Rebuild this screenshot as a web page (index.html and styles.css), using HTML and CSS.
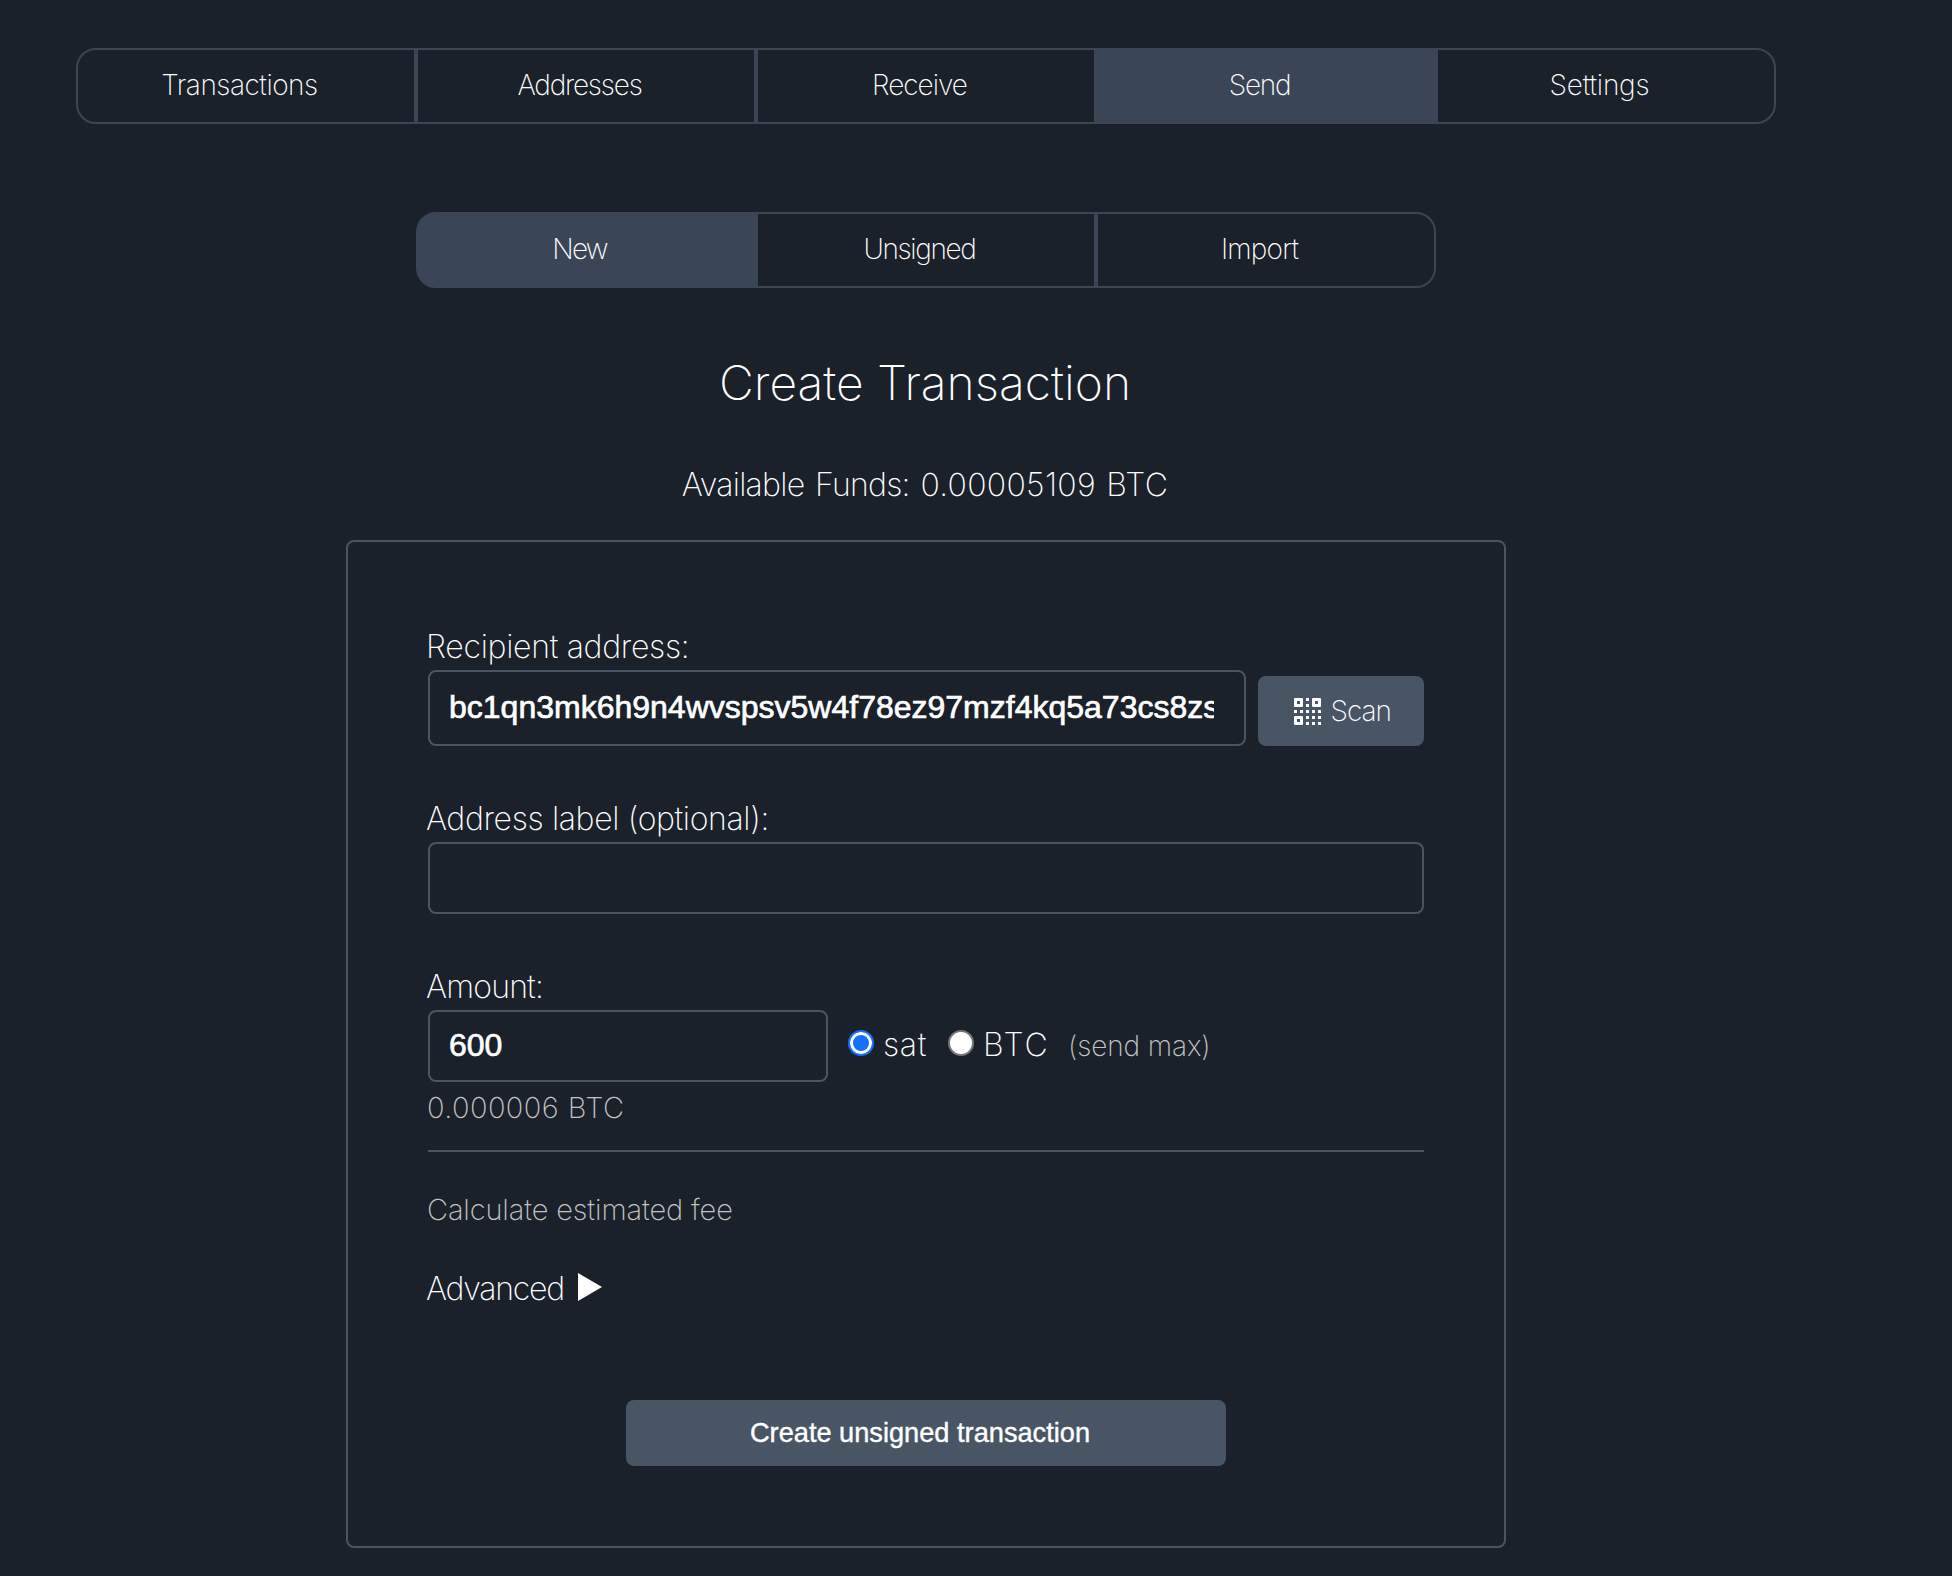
FILE: index.html
```html
<!DOCTYPE html>
<html lang="en">
<head>
<meta charset="utf-8">
<title>Create Transaction</title>
<link rel="stylesheet" href="styles.css">
</head>
<body>
<main class="page">
  <nav class="tabs">
    <a class="tab tab-transactions">Transactions</a>
    <a class="tab tab-addresses">Addresses</a>
    <a class="tab tab-receive">Receive</a>
    <a class="tab tab-send active">Send</a>
    <a class="tab tab-settings">Settings</a>
  </nav>
  <nav class="tabs subtabs">
    <a class="tab tab-new active">New</a>
    <a class="tab tab-unsigned">Unsigned</a>
    <a class="tab tab-import">Import</a>
  </nav>
  <h1 class="title">Create Transaction</h1>
  <h2 class="funds">Available Funds: <span class="funds-value">0.00005109 BTC</span></h2>
  <form class="card">
    <label class="label label-recipient" for="address">Recipient address:</label>
    <div class="row">
      <input class="input input-address" id="address" type="text" value="bc1qn3mk6h9n4wvspsv5w4f78ez97mzf4kq5a73cs8zs">
      <button class="scan" type="button">
        <svg class="qr" viewBox="0 0 27 27" fill="#fff">
          <path fill-rule="evenodd" d="M1 0h7a1 1 0 0 1 1 1v7a1 1 0 0 1-1 1H1a1 1 0 0 1-1-1V1a1 1 0 0 1 1-1zM3 3v3h3V3zM19 0h7a1 1 0 0 1 1 1v7a1 1 0 0 1-1 1h-7a1 1 0 0 1-1-1V1a1 1 0 0 1 1-1zM21 3v3h3V3zM1 18h7a1 1 0 0 1 1 1v7a1 1 0 0 1-1 1H1a1 1 0 0 1-1-1v-7a1 1 0 0 1 1-1zM3 21v3h3v-3z"/>
          <path d="M12 0h3v3h-3zM12 6h3v3h-3zM0 12h3v3H0zM6 12h3v3H6zM12 12h3v3h-3zM18 12h3v3h-3zM24 12h3v3h-3zM12 18h3v3h-3zM18 18h3v3h-3zM24 18h3v3h-3zM12 24h3v3h-3zM18 24h3v3h-3zM24 24h3v3h-3z"/>
        </svg>
        <span class="scan-text">Scan</span>
      </button>
    </div>
    <label class="label" for="name">Address label (optional):</label>
    <input class="input" id="name" type="text">
    <label class="label label-amount" for="amount">Amount:</label>
    <div class="row row-amount">
      <input class="input input-amount" id="amount" type="text" value="600">
      <input class="radio" type="radio" name="unit" checked>
      <span class="unit unit-sat">sat</span>
      <input class="radio" type="radio" name="unit">
      <span class="unit unit-btc">BTC</span>
      <span class="max">(send max)</span>
    </div>
    <div class="note converted">0.000006 BTC</div>
    <hr class="rule">
    <div class="note fee">Calculate estimated fee</div>
    <div class="advanced"><span>Advanced</span><svg class="arrow" viewBox="0 0 24 28"><path d="M0 0L24 14L0 28z" fill="#fff"/></svg></div>
    <button class="submit" type="button">Create unsigned transaction</button>
  </form>
</main>
</body>
</html>
```
FILE: styles.css
```css
* { box-sizing: border-box; }

body {
  margin: 0;
  background: #1a212a;
  color: #fff;
  font-family: Inter, "Liberation Sans", sans-serif;
  font-weight: 200;
}

.page {
  display: flex;
  flex-direction: column;
  align-items: center;
  width: 1852px;
  height: 1576px;
  padding-top: 48px;
}

.tabs { display: flex; }
.subtabs { margin-top: 88px; }

.tab {
  display: flex;
  align-items: center;
  justify-content: center;
  width: 340px;
  height: 76px;
  padding: 0 13px 3px 0;
  border: 2px solid #3a4656;
  font-size: 28px;
}
.tab:first-child { border-radius: 20px 0 0 20px; }
.tab:last-child { border-radius: 0 20px 20px 0; }
.active { background: #3a4656; }
.tab-transactions { letter-spacing: -0.5px; }
.tab-addresses { letter-spacing: -1.2px; }
.tab-receive { letter-spacing: -1px; }
.tab-send { letter-spacing: -1.3px; }
.tab-settings { letter-spacing: -0.2px; }
.tab-new { letter-spacing: -1.8px; }
.tab-unsigned { letter-spacing: -1.35px; }
.tab-import { letter-spacing: -0.8px; }

.title {
  margin: 65px 2px 0 0;
  font-size: 48px;
  line-height: 60px;
  font-weight: 200;
  letter-spacing: 0;
}
.funds {
  margin: 52px 2px 35px 0;
  font-size: 32px;
  line-height: 40px;
  font-weight: 200;
  letter-spacing: -0.75px;
  word-spacing: 2.5px;
}
.funds-value { letter-spacing: 0.3px; word-spacing: 1px; }

.card {
  display: flex;
  flex-direction: column;
  width: 1160px;
  height: 1008px;
  padding: 85px 80px 0;
  border: 2px solid #485565;
  border-radius: 8px;
}

.label {
  margin: 0 0 3px -2px;
  font-size: 32px;
  line-height: 40px;
  letter-spacing: -0.35px;
}
.label-recipient { letter-spacing: -0.3px; }
.label-amount { letter-spacing: -0.8px; }

.row {
  display: flex;
  align-items: flex-end;
  margin-bottom: 53px;
}

.input {
  height: 72px;
  margin: 0 0 53px;
  padding: 0 30px 2px 19px;
  background: transparent;
  border: 2px solid #485565;
  border-radius: 8px;
  color: #fff;
  font: 400 32px "Liberation Sans", Arial, sans-serif;
  -webkit-text-stroke: 0.7px #fff;
}
.row .input { margin: 0; }
.input-address { width: 818px; height: 76px; }

.scan {
  display: flex;
  align-items: center;
  width: 166px;
  height: 70px;
  margin-left: 12px;
  padding: 0 0 0 35.5px;
  background: #485565;
  border: 0;
  border-radius: 8px;
  color: #fff;
  font: 200 28px Inter, sans-serif;
  letter-spacing: -1px;
}
.scan-text { padding-bottom: 1px; }
.qr { width: 27px; height: 27px; margin-right: 10px; }

.row-amount { align-items: center; margin: 0 0 8px; }
.row-amount .input-amount { width: 400px; margin-right: 20px; }
.radio {
  appearance: none;
  width: 26px;
  height: 26px;
  margin: 0 0 6px;
  border: 2px solid #767676;
  border-radius: 50%;
  background: #fff;
}
.radio:checked {
  border-color: #1470ff;
  background: #1470ff;
  box-shadow: inset 0 0 0 3px #fff;
}
.unit { padding-bottom: 2px; font-size: 32px; line-height: 40px; }
.unit-sat { width: 74px; padding-left: 9px; letter-spacing: 0.7px; }
.unit-btc { width: 94px; padding-left: 9px; letter-spacing: 1.8px; }
.max {
  color: #c4c4c4;
  font-size: 28px;
  line-height: 40px;
  letter-spacing: -0.1px;
}

.note {
  margin-left: -1px;
  color: #c4c4c4;
  font-size: 29px;
  line-height: 36px;
}
.converted { letter-spacing: 0.45px; }
.rule {
  width: 100%;
  height: 2px;
  margin: 24px 0 40px;
  border: 0;
  background: #485565;
}
.fee { letter-spacing: -0.13px; }

.advanced {
  display: flex;
  align-items: center;
  margin: 41px 0 0 -2px;
  font-size: 32px;
  line-height: 40px;
  letter-spacing: -1.2px;
}
.arrow { width: 24px; height: 28px; margin: 0 0 4px 13.5px; }

.submit {
  align-self: center;
  width: 600px;
  height: 66px;
  margin-top: 91px;
  padding: 0 12px 0 0;
  background: #485565;
  border: 0;
  border-radius: 8px;
  color: #fff;
  font: 400 27.2px "Liberation Sans", Arial, sans-serif;
  -webkit-text-stroke: 0.4px #fff;
}
```
